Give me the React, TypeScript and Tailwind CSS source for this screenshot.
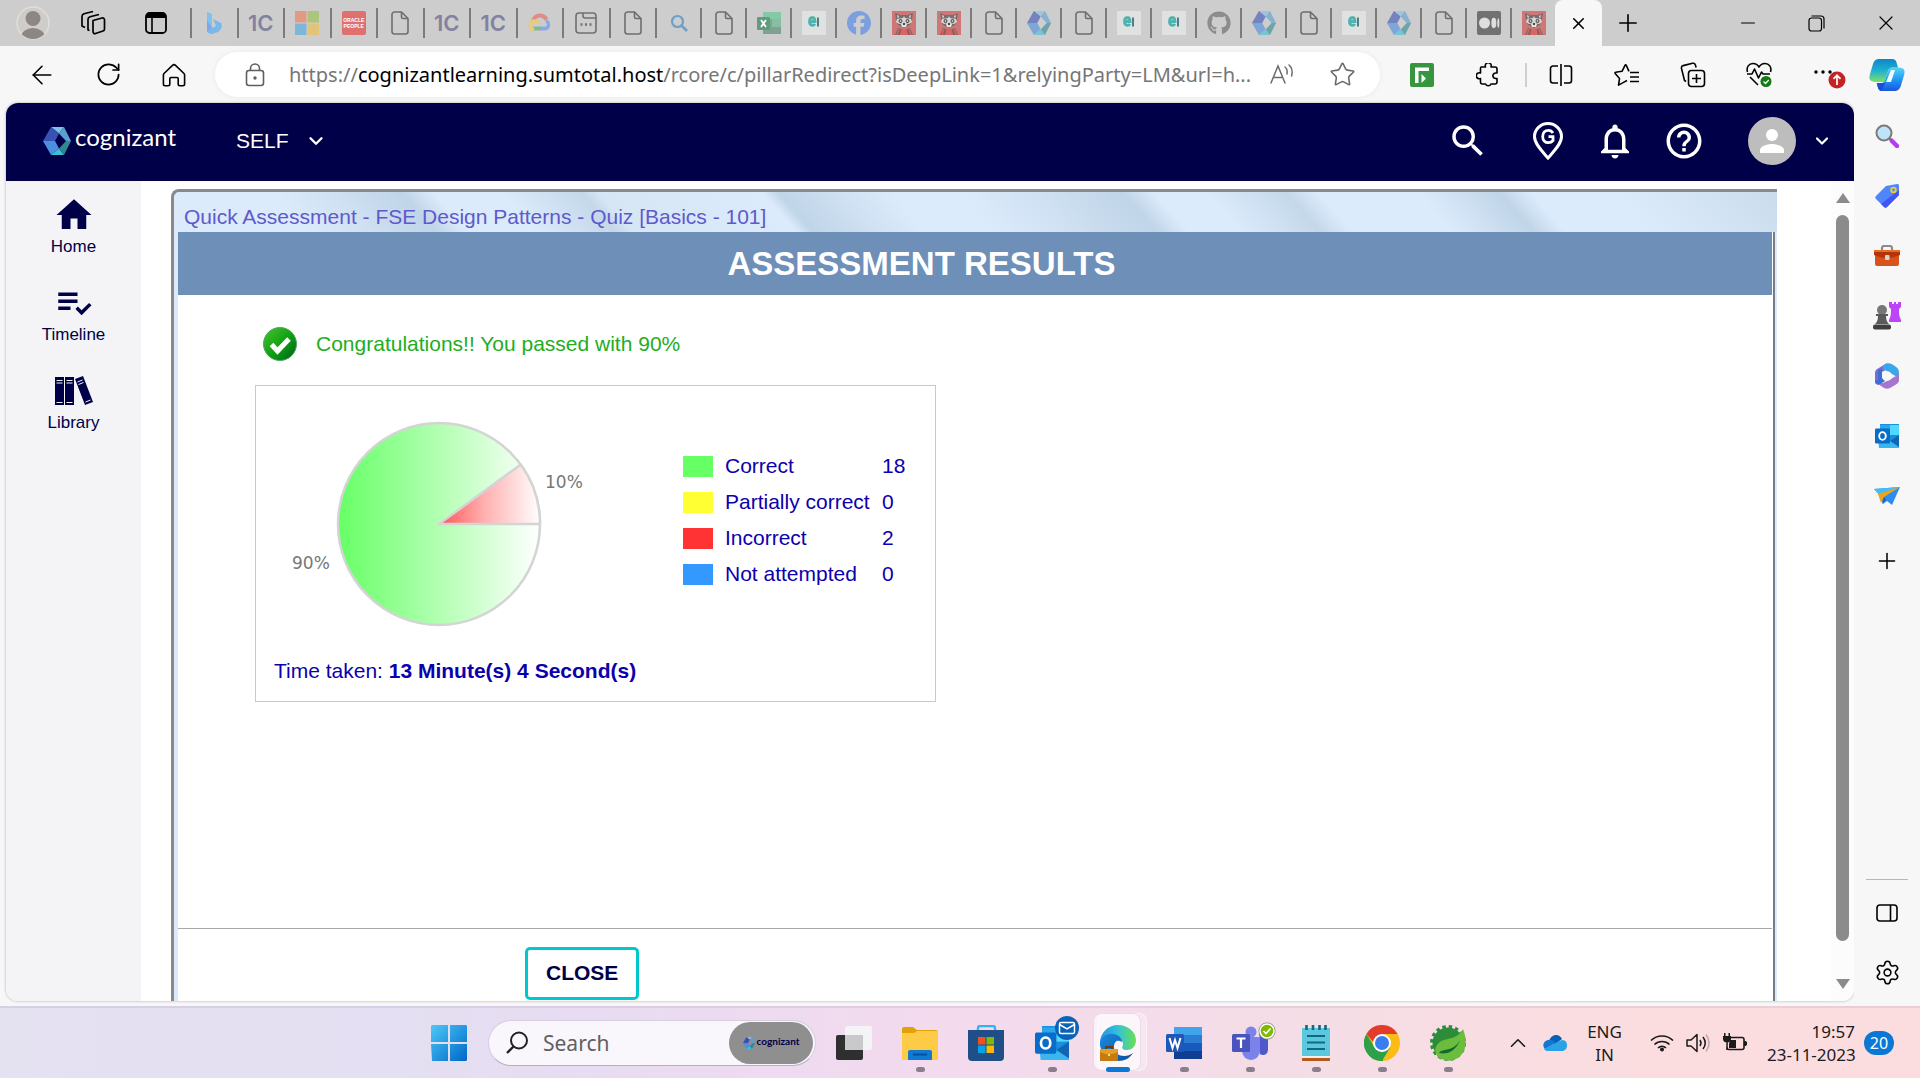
import type { ReactNode } from "react";
import { ArrowLeft, RotateCw, Star, Plus, X, Minus, Settings, ChevronUp, ChevronDown } from "lucide-react";
import { MdHome, MdHelpOutline, MdPlaylistAddCheck, MdSearch, MdNotificationsNone } from "react-icons/md";
import { FaGithub, FaFacebook } from "react-icons/fa6";

type IconProps = { w?: number; h?: number; box?: string; children: ReactNode };

function Icon({ w = 24, h = w, box, children }: IconProps) {
  return (
    <svg width={w} height={h} viewBox={box ?? `0 0 ${w} ${h}`} fill="none" aria-hidden="true" className="block shrink-0">
      {children}
    </svg>
  );
}

/* ---------- tab icons ---------- */

function PageIcon() {
  return (
    <Icon w={18} h={24}>
      <path d="M3 1h7.500l6.500 6.500V20.500A2.500 2.500 0 0 1 14.500 23h-11A2.500 2.500 0 0 1 1 20.500V3.500A2.500 2.500 0 0 1 3.500 1M10.500 1v5a1.500 1.500 0 0 0 1.500 1.500h5" stroke="#6e6e6e" strokeWidth="1.600" />
    </Icon>
  );
}

function BingIcon() {
  return (
    <Icon w={18} h={24}>
      <path d="M2 1l5 2v13l-5 5z" fill="#7cc4ee" />
      <path d="M7 17v3l-2 2-3-1V9z" fill="#7fa4ee" />
      <path d="M8 8l8 4c2 3 0 7-3 9l-6 2c-3 0-5-2-5-4l7-3 2-1z" fill="#78b8ea" />
    </Icon>
  );
}

function OneCIcon() {
  return <span className="font-[Inter] text-[22px] leading-6 font-semibold text-[#8381a0]">1C</span>;
}

function MicrosoftIcon() {
  return (
    <Icon w={24}>
      <path fill="#e29a84" d="M0 0h11.500v11.500H0z" />
      <path fill="#adc57a" d="M12.500 0H24v11.500H12.500z" />
      <path fill="#7ab7d9" d="M0 12.500h11.500V24H0z" />
      <path fill="#e3c37a" d="M12.500 12.500H24V24H12.500z" />
    </Icon>
  );
}

function OracleIcon() {
  return (
    <span className="flex h-6 w-6 flex-col items-center justify-center rounded-xs bg-[#df7070] font-['Liberation_Sans'] text-[5px] leading-[6px] font-bold text-white">
      <span>ORACLE</span>
      <span>PEOPLE</span>
    </span>
  );
}

function CloudIcon() {
  return (
    <Icon w={24} h={20}>
      <path d="M5 8.500C6 4.500 9 2.500 12 2.500c3 0 5 1.500 6.500 4" stroke="#e08b84" strokeWidth="4" />
      <path d="M18 6c4 1.500 4.500 5 4 7.500-.600 2.500-3 4-5 4h-5v-4h5c2 0 2.500-3 .500-4z" fill="#8aa9e6" />
      <path d="M5 15.500h7.500" stroke="#82b98f" strokeWidth="4" />
      <path d="M6 17C1 16 1 8 6 8c3 0 4 1 5 3" stroke="#e6cd7c" strokeWidth="3.600" />
    </Icon>
  );
}

function NewTabIcon() {
  return (
    <Icon w={22}>
      <rect x="1" y="1" width="20" height="20" rx="3" stroke="#707070" strokeWidth="1.600" />
      <path d="M8 1v3a2 2 0 0 0 2 2h11" stroke="#707070" strokeWidth="1.600" />
      <path d="M5.500 12.500h2M10 12.500h2M14.500 12.500h2" stroke="#707070" strokeWidth="2.400" />
    </Icon>
  );
}

function ExcelIcon() {
  return (
    <Icon w={24} h={22}>
      <path fill="#84c9a5" d="M6 0h18v7H6z" />
      <path fill="#6fae8e" d="M6 7h9v8H6z" />
      <path fill="#87bda0" d="M15 7h9v8h-9z" />
      <path fill="#7fa18f" d="M6 15h18v7H6z" />
      <rect y="5" width="13" height="13" rx="1" fill="#5f9d7c" />
      <path d="M4 8l5 7M9 8l-5 7" stroke="#fff" strokeWidth="1.800" />
    </Icon>
  );
}

function LetterEIcon() {
  return (
    <Icon w={24}>
      <path fill="#dfe2e1" d="M0 0h24v24H0z" />
      <path d="M7.500 10.500h5.500c0-5-5.500-5-5.500 0 0 4.500 4 4.500 5.500 2.500" stroke="#4fb3b3" strokeWidth="2.800" />
      <path d="M16 6.500v9" stroke="#4f7f86" strokeWidth="2" />
      <path d="M9 6.500h4" stroke="#6fae70" strokeWidth="1.500" />
    </Icon>
  );
}

function RaccoonIcon() {
  return (
    <Icon w={24}>
      <path fill="#d17676" d="M0 0h24v24H0z" />
      <path d="M3 2l5 2h8l5-2-1 7-2 5-6 3-6-3-2-5z" fill="#776e6d" />
      <path d="M5 4l2 1-1 3zM19 4l-2 1 1 3z" fill="#e4dfdd" />
      <path d="M5 8l6-1 1-2 1 2 6 1 1 3-3 2-5-1-5 1-3-2z" fill="#dcd7d5" />
      <circle cx="8.500" cy="10" r="2" fill="#555" />
      <circle cx="15.500" cy="10" r="2" fill="#555" />
      <circle cx="8.500" cy="10" r=".8" fill="#fff" />
      <circle cx="15.500" cy="10" r=".8" fill="#fff" />
      <path d="M9 13l3-2 3 2-1 3h-4z" fill="#ece8e6" />
      <circle cx="12" cy="13" r="1.200" fill="#444" />
      <path d="M3 24l3-7 6 2 6-2 3 7z" fill="#7d6262" />
      <path d="M9.500 18h5l1.500 6H8z" fill="#d96464" />
      <path d="M5 24l2-6M19 24l-2-6" stroke="#d96464" strokeWidth="1.500" />
    </Icon>
  );
}

function HexLogo({ size = 24, faded = false }: { size?: number; faded?: boolean }) {
  return (
    <span className={faded ? "opacity-60" : ""}>
      <Icon w={size} h={size} box="0 0 28 28">
        <path fill="#7fc0e6" d="M8 0h13l-5 6.500z" />
        <path fill="#5a9fd2" d="M21 0l7 14h-5l-7-7.500z" />
        <path fill="#3a51b4" d="M8 0l8 6.500-4 7.500H0z" />
        <path fill="#4a8fe0" d="M0 14h12l4 7.500L8 28z" />
        <path fill="#3cc0d8" d="M16 21.500L8 28h13z" />
        <path fill="#2c8a90" d="M23 14h5l-7 14-5-6.500z" />
      </Icon>
    </span>
  );
}

function MediumIcon() {
  return (
    <Icon w={24}>
      <rect width="24" height="24" rx="2" fill="#717171" />
      <ellipse cx="7.500" cy="12" rx="5.500" ry="5.500" fill="#dedede" />
      <ellipse cx="16.800" cy="12" rx="2.500" ry="5.200" fill="#dedede" />
      <ellipse cx="21.300" cy="12" rx="1" ry="4.800" fill="#dedede" />
    </Icon>
  );
}

const wideTabs: [string, ReactNode][] = [
  ["Bing", <BingIcon />],
  ["OneCognizant", <OneCIcon />],
  ["Microsoft", <MicrosoftIcon />],
  ["PeopleSoft", <OracleIcon />],
  ["Document", <PageIcon />],
  ["OneCognizant", <OneCIcon />],
  ["OneCognizant", <OneCIcon />],
  ["Cloud", <CloudIcon />],
  ["New tab", <NewTabIcon />],
  ["Document", <PageIcon />],
];

const narrowTabs: [string, ReactNode][] = [
  ["Search", <Icon w={18}><circle cx="7.500" cy="7.500" r="5.500" stroke="#6f9fc9" strokeWidth="2.200" /><path d="M11.500 11.500L17 17" stroke="#6f9fc9" strokeWidth="2.600" /></Icon>],
  ["Document", <PageIcon />],
  ["Spreadsheet", <ExcelIcon />],
  ["Learning", <LetterEIcon />],
  ["Facebook", <FaFacebook size={24} color="#7c9fe0" />],
  ["Forum", <RaccoonIcon />],
  ["Forum", <RaccoonIcon />],
  ["Document", <PageIcon />],
  ["Cognizant", <HexLogo faded />],
  ["Document", <PageIcon />],
  ["Learning", <LetterEIcon />],
  ["Learning", <LetterEIcon />],
  ["GitHub", <FaGithub size={24} color="#8a8c8e" />],
  ["Cognizant", <HexLogo faded />],
  ["Document", <PageIcon />],
  ["Learning", <LetterEIcon />],
  ["Cognizant", <HexLogo faded />],
  ["Document", <PageIcon />],
  ["Medium", <MediumIcon />],
  ["Forum", <RaccoonIcon />],
];

function Tab({ name, children }: { name: string; children: ReactNode }) {
  return (
    <button aria-label={name} className="flex h-[30px] flex-1 items-center justify-center border-l-2 border-[#7b7b7b]">
      {children}
    </button>
  );
}

function TabStrip() {
  return (
    <div className="flex h-[46px] shrink-0 items-center bg-[#cdcdcd] text-black">
      <div className="flex w-[190px] shrink-0 items-center pl-4">
        <button aria-label="Profile">
          <Icon w={34}>
            <clipPath id="profile"><circle cx="17" cy="17" r="16" /></clipPath>
            <circle cx="17" cy="17" r="16" fill="#cfcdc9" stroke="#e2dfda" strokeWidth="1.500" />
            <g clipPath="url(#profile)" fill="#8c8784">
              <circle cx="17" cy="12.500" r="7.500" />
              <ellipse cx="17" cy="31" rx="12" ry="9" />
            </g>
          </Icon>
        </button>
        <button aria-label="Workspaces" className="ml-[30px]">
          <Icon w={26}>
            <g stroke="#000" strokeWidth="1.700" strokeLinejoin="round">
              <path d="M13 10.500l9-2.500c1.500-.400 2.500.500 2.500 2v9c0 1-.600 1.800-1.500 2l-7.500 2.500c-1.500.500-2.500-.500-2.500-2z" />
              <path d="M9.500 20.500L8 20V9.500c0-1.300.700-2.200 2-2.700L19 4.500" />
              <path d="M5 17.500L2 16V6.500c0-1.300.700-2.200 2-2.700L13 1.500" />
            </g>
          </Icon>
        </button>
        <button aria-label="Tab actions" className="ml-[39px]">
          <Icon w={22}>
            <rect x="1" y="1" width="20" height="20" rx="3.500" stroke="#000" strokeWidth="1.800" />
            <path d="M1 6V4a3 3 0 0 1 3-3h14a3 3 0 0 1 3 3v2z" fill="#000" />
            <path d="M7 6v15" stroke="#000" strokeWidth="1.600" />
          </Icon>
        </button>
      </div>
      <div className="flex w-[465px]">
        {wideTabs.map(([name, icon], i) => <Tab key={i} name={name}>{icon}</Tab>)}
      </div>
      <div className="flex w-[900px]">
        {narrowTabs.map(([name, icon], i) => <Tab key={i} name={name}>{icon}</Tab>)}
      </div>
      <div className="flex h-full w-[47px] items-center justify-center rounded-t-lg bg-[#f7f7f7]">
        <button aria-label="Close tab"><X size={19} strokeWidth={2} /></button>
      </div>
      <button aria-label="New tab" className="ml-3"><Plus size={28} strokeWidth={1.4} /></button>
      <div className="ml-auto flex items-center">
        <button aria-label="Minimize" className="flex w-[69px] justify-center"><Minus size={22} strokeWidth={1.2} /></button>
        <button aria-label="Restore" className="flex w-[69px] justify-center">
          <Icon w={17}>
            <rect x="1" y="3" width="12.500" height="13" rx="2.500" stroke="#000" strokeWidth="1.200" />
            <path d="M3.500 1H13a3 3 0 0 1 3 3v9.500" stroke="#000" strokeWidth="1.200" />
          </Icon>
        </button>
        <button aria-label="Close window" className="flex w-[69px] justify-center"><X size={24} strokeWidth={1.2} /></button>
      </div>
    </div>
  );
}

/* ---------- toolbar ---------- */

function ToolButton({ name, children }: { name: string; children: ReactNode }) {
  return <button aria-label={name} className="flex h-10 w-[66px] shrink-0 items-center justify-center">{children}</button>;
}

function Toolbar() {
  return (
    <div className="flex h-[57px] shrink-0 items-center bg-[#f7f7f7] pl-[9px] text-black">
      <ToolButton name="Back"><ArrowLeft size={30} strokeWidth={1.3} /></ToolButton>
      <ToolButton name="Refresh"><RotateCw size={27} strokeWidth={1.5} /></ToolButton>
      <ToolButton name="Home">
        <Icon w={24}>
          <path d="M2 10.500L10.500 2.300a2.200 2.200 0 0 1 3 0L22 10.500c.400.400.600.900.600 1.500V21c0 1-.700 1.700-1.700 1.700h-3c-1 0-1.700-.700-1.700-1.700v-5.300c0-.700-.600-1.200-1.200-1.200h-6c-.700 0-1.200.600-1.200 1.200V21c0 1-.800 1.700-1.700 1.700h-3c-1 0-1.700-.700-1.700-1.700v-9c0-.600.200-1.100.600-1.500z" stroke="#000" strokeWidth="1.600" />
        </Icon>
      </ToolButton>
      <div className="ml-2 flex h-[45px] min-w-0 flex-1 items-center rounded-full bg-white pr-6 pl-[30px] shadow-[0_0_6px_rgba(0,0,0,0.06)]">
        <Icon w={20} h={24}>
          <rect x="1.500" y="7.500" width="17" height="15" rx="2.500" stroke="#5f5f5f" strokeWidth="1.600" />
          <path d="M5.500 7.500V5.500a4.500 4.500 0 0 1 9 0v2" stroke="#5f5f5f" strokeWidth="1.600" />
          <circle cx="10" cy="15" r="1.700" fill="#5f5f5f" />
        </Icon>
        <div role="textbox" aria-label="Address" className="ml-6 min-w-0 flex-1 overflow-hidden font-['Noto_Sans','Open_Sans',sans-serif] text-[20px] leading-8 whitespace-nowrap text-[#767676]">
          https://<span className="text-black">cognizantlearning.sumtotal.host</span>/rcore/c/pillarRedirect?isDeepLink=1&amp;relyingParty=LM&amp;url=h...
        </div>
        <button aria-label="Read aloud" className="ml-4">
          <Icon w={26} h={24}>
            <path d="M2 20L9 3l7 17M4.500 14.500h9" stroke="#6b6b6b" strokeWidth="1.500" strokeLinecap="round" />
            <path d="M16 4c2 1.500 2.500 4 2 7M20 2c3 2.500 3.700 6.500 2.600 11" stroke="#6b6b6b" strokeWidth="1.500" strokeLinecap="round" />
          </Icon>
        </button>
        <button aria-label="Favorite" className="ml-[34px] text-[#6b6b6b]"><Star size={27} strokeWidth={1.4} /></button>
      </div>
      <div className="flex shrink-0 items-center pl-[9px]">
        <ToolButton name="Assistant">
          <Icon w={24}>
            <rect width="24" height="24" rx="2" fill="#36963e" />
            <path fill="#fff" d="M5 4.500h14v3.500H8.500V20H5z" />
            <path d="M11.500 11l4.500 4.500-4.500 4.500z" fill="#fff" />
          </Icon>
        </ToolButton>
        <ToolButton name="Extensions">
          <Icon w={24}>
            <path d="M5 4h4.500a3 3 0 1 1 5.500 0h4a2 2 0 0 1 2 2v4h-.800a2.800 2.800 0 1 0 0 5.500H21V19a2 2 0 0 1-2 2h-4a3 3 0 0 1-5.500 0H6.500a2 2 0 0 1-2-2v-3.500a3 3 0 1 1 0-5.500V5z" stroke="#000" strokeWidth="1.600" strokeLinejoin="round" />
          </Icon>
        </ToolButton>
        <span className="mr-[1px] ml-1 h-6 w-[2px] bg-[#cfcfcf]" />
        <ToolButton name="Split screen">
          <Icon w={24}>
            <path d="M9 3H4a2.500 2.500 0 0 0-2.500 2.500v12A2.500 2.500 0 0 0 4 20h5M15 3h5a2.500 2.500 0 0 1 2.500 2.500v12A2.500 2.500 0 0 1 20 20h-5M12 1v22" stroke="#000" strokeWidth="1.600" />
          </Icon>
        </ToolButton>
        <ToolButton name="Favorites">
          <Icon w={26} h={24}>
            <path d="M13 17.500l-3 1.600-5.500 3 1-6.500L1.200 10.500a.7.7 0 0 1 .400-1.200L8 8.300l3-6c.300-.600 1-.600 1.300 0L15 8.300M16 9.500h9M16 14h9M16 18.500h9" stroke="#000" strokeWidth="1.600" strokeLinejoin="round" />
          </Icon>
        </ToolButton>
        <ToolButton name="Collections">
          <Icon w={26}>
            <rect x="8.500" y="8.500" width="16" height="16" rx="3" stroke="#000" strokeWidth="1.600" />
            <path d="M16.500 12v9M12 16.500h9M6 19.500l-1.500-1L1.500 6.500C1.200 5 2 4 3.200 3.600L12.500 1.300c1.400-.300 2.500.400 2.900 1.700l.700 2.500" stroke="#000" strokeWidth="1.600" />
          </Icon>
        </ToolButton>
        <ToolButton name="Browser essentials">
          <Icon w={26}>
            <path d="M1.500 10C0 5 3 1.500 7 1.500c2.500 0 4.500 1 6 3.500 1.500-2.500 3.500-3.500 6-3.500 4 0 7 3.500 5.500 8.500M4 15l8 8M1 12h5l2.500-5 4 9 3-6 1.500 2h7" stroke="#000" strokeWidth="1.600" strokeLinejoin="round" />
            <circle cx="20" cy="19.500" r="5.500" fill="#107c10" />
            <path d="M17.500 19.500l2 2 3.300-3.500" stroke="#fff" strokeWidth="1.300" />
          </Icon>
        </ToolButton>
        <button aria-label="Settings and more" className="ml-[6px] flex w-[62px] justify-center">
          <Icon w={34} h={30}>
            <g fill="#000"><circle cx="4" cy="12" r="1.700" /><circle cx="11" cy="12" r="1.700" /><circle cx="18" cy="12" r="1.700" /></g>
            <circle cx="25" cy="20" r="8.500" fill="#c42323" />
            <path d="M25 25V15.500M21.500 18.800l3.500-3.500 3.500 3.500" stroke="#fff" strokeWidth="1.700" />
          </Icon>
        </button>
        <button aria-label="Copilot" className="mr-[15px] ml-[9px]">
          <Icon w={36} h={34}>
            <defs>
              <linearGradient id="cpA" x1="0" y1="0" x2="0" y2="1"><stop stopColor="#0d86c8" /><stop offset=".5" stopColor="#20b0cf" /><stop offset="1" stopColor="#7be06c" /></linearGradient>
              <linearGradient id="cpB" x1="0" y1="0" x2="0" y2="1"><stop stopColor="#52d6fa" /><stop offset=".6" stopColor="#1c8df0" /><stop offset="1" stopColor="#1c55dd" /></linearGradient>
            </defs>
            <path d="M13 33c-2.500 0-3.500-1.500-4.200-4L7.500 25H12c2.500 0 3.500-1 4.200-3.500L20 9.500h8c6 0 8 1.500 7.500 5.500-.500 3-2.500 9-3.500 12.500-1.500 4-3 5.500-7 5.500z" fill="url(#cpB)" />
            <path d="M8 25h8l-3 8c-2.500 0-3.500-1.500-4.200-4z" fill="#1a4fd8" />
            <path d="M23 1c3 0 4 1.500 4.700 4L29 9.500h-5.500c-3 0-4 1.500-4.700 4L15.500 24H8c-6 0-8-1.500-7.500-5.500.500-3 2.500-9 3.500-12.500C5.500 2 7 1 11 1z" fill="url(#cpA)" />
            <path d="M22 12h4l-4 12h-5z" fill="#f2fbff" />
          </Icon>
        </button>
      </div>
    </div>
  );
}

/* ---------- site header and navigation ---------- */

function SiteHeader() {
  return (
    <header className="flex h-[78px] shrink-0 items-center bg-[#000048] pb-[2px] pl-[37px] text-white">
      <a href="#home" className="flex items-center gap-1">
        <HexLogo size={28} />
        <span className="-mt-2 font-[Lato] text-[24px] leading-8">cognizant</span>
      </a>
      <button className="ml-[60px] flex items-center gap-4 font-['Liberation_Sans'] text-[21px] leading-6">
        SELF <ChevronDown size={22} strokeWidth={2.6} />
      </button>
      <div className="ml-auto flex items-center pr-[18px]">
        <button aria-label="Search" className="flex w-10 justify-center"><MdSearch size={42} className="shrink-0" /></button>
        <button aria-label="Location" className="ml-10 flex w-10 justify-center">
          <Icon w={32} h={38}>
            <path d="M16 36C10 29 2.500 22 2.500 14.500a13.500 13 0 0 1 27 0C29.500 22 22 29 16 36z" stroke="#fff" strokeWidth="3" />
            <path d="M21 11c-1-1.700-2.700-2.700-4.700-2.700-3.300 0-5.600 2.500-5.600 6.200s2.300 6.200 5.600 6.200c2 0 3.700-.700 4.700-2v-4h-4.500" stroke="#fff" strokeWidth="2.800" />
          </Icon>
        </button>
        <button aria-label="Notifications" className="ml-[27px] flex w-10 justify-center"><MdNotificationsNone size={42} className="shrink-0" /></button>
        <button aria-label="Help" className="ml-[29px] flex w-10 justify-center"><MdHelpOutline size={42} className="shrink-0" /></button>
        <button aria-label="Account" className="ml-11 flex items-center gap-3">
          <Icon w={48}>
            <circle cx="24" cy="24" r="24" fill="#bdbdbd" />
            <circle cx="24" cy="18" r="6" fill="#fff" />
            <path d="M12 36v-3c0-4 8-6 12-6s12 2 12 6v3z" fill="#fff" />
          </Icon>
          <span className="flex w-7 justify-center"><ChevronDown size={20} strokeWidth={2.6} /></span>
        </button>
      </div>
    </header>
  );
}

function BooksIcon() {
  return (
    <Icon w={38} h={30}>
      <path fill="#000048" d="M0 1h9v28H0zM10 1h9v28h-9zM20 3l8-3 10 26-8 3z" />
      <path d="M1.500 4.500h6M1.500 7h6M1.500 26.500h6M11.500 4.500h6M11.500 7h6M11.500 26.500h6M22.500 6l5-2M23.500 8.500l5-2M30.500 26l5-2" stroke="#f4f4f7" strokeWidth="1" />
    </Icon>
  );
}

const navItems: [string, ReactNode][] = [
  ["Home", <MdHome size={42} />],
  ["Timeline", <MdPlaylistAddCheck size={42} />],
  ["Library", <BooksIcon />],
];

function SideNav() {
  return (
    <nav className="flex w-[135px] shrink-0 flex-col gap-4 bg-[#f4f4f7] pt-3 font-['Liberation_Sans'] text-[17px] leading-5 text-[#000048]">
      {navItems.map(([label, icon]) => (
        <a key={label} href={`#${label.toLowerCase()}`} className="flex h-[72px] flex-col items-center">
          <span className="flex h-11 items-center">{icon}</span>
          <span>{label}</span>
        </a>
      ))}
    </nav>
  );
}

/* ---------- assessment ---------- */

const results = [
  { label: "Correct", count: 18, color: "bg-[#66ff66]" },
  { label: "Partially correct", count: 0, color: "bg-[#ffff33]" },
  { label: "Incorrect", count: 2, color: "bg-[#ff3333]" },
  { label: "Not attempted", count: 0, color: "bg-[#3399ff]" },
];

function PieChart() {
  return (
    <svg width="310" height="217" viewBox="0 0 310 217" role="img" aria-label="90% correct, 10% incorrect" className="shrink-0">
      <defs>
        <linearGradient id="green"><stop stopColor="#66ff66" /><stop offset="1" stopColor="#ffffff" /></linearGradient>
        <linearGradient id="red"><stop stopColor="#ff5555" /><stop offset=".45" stopColor="#ffb0b0" /><stop offset="1" stopColor="#ffffff" /></linearGradient>
      </defs>
      <g stroke="#d4d4d4" strokeWidth="2.500" strokeLinejoin="round">
        <circle cx="153" cy="109" r="101" fill="url(#green)" />
        <path d="M153 109L234.700 49.600A101 101 0 0 1 254 109z" fill="url(#red)" />
      </g>
      <g fill="#777" fontFamily="DejaVu Sans, sans-serif" fontSize="17">
        <text x="6" y="154">90%</text>
        <text x="259" y="73">10%</text>
      </g>
    </svg>
  );
}

function Assessment() {
  return (
    <section className="flex w-[1606px] flex-col font-['Liberation_Sans'] text-[21px]">
      <div className="h-[43px] rounded-tl-lg border-t-[3px] border-l-[3px] border-[#8a8a8a] bg-[linear-gradient(49deg,#dcebfc_0%,#dcebfc_8%,#c0d5e8_16%,#dcebfc_18%,#dcebfc_22%,#c4d8ea_27%,#d6e6f4_28%,#dcebfc_38%,#c0d5e8_39%,#dcebfc_46%,#dcebfc_50%,#c0d5e8_60%,#dcebfc_62%,#dcebfc_65%,#c4d8ea_70%,#dcebfc_72%,#dcebfc_78%,#c0d5e8_83%,#dcebfc_85%,#dcebfc_90%,#cadcec_100%)] pt-[10px] pl-[10px] leading-[30px] text-[#6059cc]">
        Quick Assessment - FSE Design Patterns - Quiz [Basics - 101]
      </div>
      <div className="flex flex-1 border-r-2 border-l-[3px] border-r-[#dcebfc] border-l-[#8a8a8a]">
        <div className="w-1 bg-[#dcebfc]" />
        <div className="flex flex-1 flex-col">
          <h1 className="flex h-[63px] items-center justify-center bg-[#6e8fb8] pr-[107px] text-[33px] leading-9 font-bold text-white">
            ASSESSMENT RESULTS
          </h1>
          <div className="flex items-center gap-[19px] pt-8 pl-[85px] text-[#22ad22]">
            <Icon w={34}>
              <defs>
                <linearGradient id="ok" x1="0" y1="0" x2="1" y2="1"><stop stopColor="#48c62c" /><stop offset=".6" stopColor="#079a10" /><stop offset="1" stopColor="#04591f" /></linearGradient>
              </defs>
              <circle cx="17" cy="17" r="16.500" fill="url(#ok)" stroke="#54a06a" />
              <path d="M8.500 17.500l6 6.500L26 12" stroke="#fff" strokeWidth="5" />
            </Icon>
            <p className="leading-8">Congratulations!! You passed with 90%</p>
          </div>
          <div className="mt-6 ml-[77px] w-[681px] border border-[#c9c9c9] pt-[29px] pb-[15px] text-[#0b00ad]">
            <div className="flex items-start pl-[30px]">
              <PieChart />
              <table className="mt-[33px] ml-[87px]">
                <tbody>
                  {results.map((r) => (
                    <tr key={r.label} className="h-9">
                      <td className="w-[42px] p-0"><div className={`h-[21px] w-[30px] ${r.color}`} /></td>
                      <th scope="row" className="w-[157px] p-0 text-left leading-6 font-normal whitespace-nowrap">{r.label}</th>
                      <td className="p-0 leading-6">{r.count}</td>
                    </tr>
                  ))}
                </tbody>
              </table>
            </div>
            <p className="mt-6 pl-[18px] leading-[30px]">
              Time taken: <strong>13 Minute(s) 4 Second(s)</strong>
            </p>
          </div>
          <div className="mt-auto h-[73px] border-t border-[#a8a8a8] pt-[18px] pl-[347px]">
            <button className="h-[53px] rounded-[5px] border-[3px] border-[#00c8cd] px-[18px] pb-[2px] text-[21px] leading-6 font-bold text-[#000048]">CLOSE</button>
          </div>
        </div>
        <div className="w-[3px] border-r-2 border-[#747c86]" />
      </div>
    </section>
  );
}

function ScrollBar() {
  return (
    <div className="ml-auto flex w-[23px] shrink-0 flex-col items-center bg-[#fcfcfc] pt-3 pb-3">
      <Icon w={14} h={10}><path d="M7 0l7 10H0z" fill="#8b8b8b" /></Icon>
      <div className="mt-3 mb-[38px] w-[13px] flex-1 rounded-full bg-[#8b8b8b]" />
      <Icon w={14} h={10}><path d="M0 0h14L7 10z" fill="#8b8b8b" /></Icon>
    </div>
  );
}

/* ---------- browser side bar ---------- */

function OutlookIcon({ size = 24 }: { size?: number }) {
  return (
    <Icon w={size} box="0 0 24 24">
      <path fill="#1b8fdc" d="M5 0h19v23H5z" />
      <path fill="#50d9ff" d="M15 1h9v10h-9z" />
      <path fill="#28a8ea" d="M5 1h10v10H5z" />
      <path fill="#1066b5" d="M24 11l-9 6 9 6z" />
      <path fill="#39b5f0" d="M3 15l12 2 9 6v1H4z" />
      <rect y="4.500" width="15" height="15" rx="1.200" fill="#0a6cc9" />
      <ellipse cx="7.500" cy="12" rx="3.300" ry="3.900" stroke="#fff" strokeWidth="1.900" />
    </Icon>
  );
}

const sideApps: [string, ReactNode][] = [
  ["Search", <Icon w={24}><circle cx="9" cy="9" r="7.500" fill="#bfe4f8" stroke="#7a7a7a" strokeWidth="2" /><path d="M14.500 14.500l3 3" stroke="#777" strokeWidth="3" /><path d="M17 17l5 5" stroke="#b33cf0" strokeWidth="4.500" strokeLinecap="round" /></Icon>],
  ["Shopping", <Icon w={24}><path d="M11 2l11-2c1.500 0 2 .500 2 2v9l-12 12c-1 1-2 1-3 0L1 15c-1-1-1-2 0-3z" fill="#4f86fb" /><path d="M24 6v5L12 23c-1 1-2 1-3 0l-3-3z" fill="#4454f4" /><circle cx="18.500" cy="6" r="2.300" stroke="#f5cf1c" strokeWidth="1.800" /></Icon>],
  ["Tools", <Icon w={28} h={22}><path d="M9 6V3a2 2 0 0 1 2-2h6a2 2 0 0 1 2 2v3" stroke="#8b8b8b" strokeWidth="2.200" /><rect x="2" y="6" width="24" height="15" rx="2" fill="#d9521b" /><path d="M1 5h26v5c-4 2-9 3-13 3S5 12 1 10z" fill="#b5330d" /><path d="M1 5h26v2H1z" fill="#ea6e22" /><rect x="12" y="10" width="4.500" height="5" rx="1" fill="#d8d4d0" /></Icon>],
  ["Games", <Icon w={28}><circle cx="9" cy="8" r="5" fill="#777" /><path d="M3 12h12v2h-2c0 4 1 6 3 8H2c2-2 3-4 3-8H3z" fill="#5a5a5a" /><rect y="22.500" width="18" height="5" rx="2" fill="#3e3e3e" /><path d="M16 0h3v2h2V0h2v2h2V0h3v5l-2 2c0 5 0 7 2 11v2H16v-2c2-4 2-6 2-11l-2-2z" fill="#bd45f7" /></Icon>],
  ["Microsoft 365", <Icon w={24} h={26}><path d="M12 0L3 5.500C1 6.500 0 8 0 10v9c0 1 .500 2 2 2.500 3 1.500 5-.500 5-3V9l8-4.500z" fill="#7e6bd0" /><path d="M11 1c3-2 6 0 8 1.500 4 2.500 5 4 5 7.500v5L8 6c-1-2 0-3.500 3-5z" fill="#3aa7ea" /><path d="M24 10v7c0 2-1 3-3 4.500l-6 3.500c-2 1-4 1-6 0l-6-4 5-1 8-4c3-2 4-2 8-6z" fill="#a675cf" /><path d="M0 18c0 3 4 4 7 2l3-2-3-3V6L3 7v10z" fill="#3b6fd6" /><circle cx="12" cy="13" r="4.800" fill="#f7f7f7" /></Icon>],
  ["Outlook", <OutlookIcon size={24} />],
  ["Drop", <Icon w={26} h={18}><path d="M0 2l26-2-8 18-5-4-4 3-3-9z" fill="#2d8cf0" /><path d="M0 2l26-2L5 8z" fill="#42bdf5" /><path d="M26 0L4 7l3 9 3-6z" fill="#efa31c" /><path d="M10 10l-2 7 4-4z" fill="#1c5fc4" /></Icon>],
];

function EdgeSidebar() {
  return (
    <aside className="flex w-[66px] shrink-0 flex-col items-center bg-[#f7f7f7] pt-[3px] text-black">
      {sideApps.map(([name, icon]) => (
        <button key={name} aria-label={name} className="flex h-[60px] w-full shrink-0 items-center justify-center">{icon}</button>
      ))}
      <button aria-label="Customize" className="mt-[22px]"><Plus size={26} strokeWidth={1.4} /></button>
      <div className="mt-auto h-[1px] w-[42px] bg-[#b8b8b8]" />
      <button aria-label="Side pane" className="mt-6">
        <Icon w={22} h={18}><rect x="1" y="1" width="20" height="16" rx="3" stroke="#000" strokeWidth="1.600" /><path d="M14.500 1v16" stroke="#000" strokeWidth="1.600" /></Icon>
      </button>
      <button aria-label="Settings" className="mt-[37px] mb-5"><Settings size={27} strokeWidth={1.4} /></button>
    </aside>
  );
}

/* ---------- task bar ---------- */

function StoreIcon() {
  return (
    <Icon w={36}>
      <path d="M10 7V3a2 2 0 0 1 2-2h13a2 2 0 0 1 2 2v4" stroke="#2fb6f2" strokeWidth="2.400" />
      <path d="M0 5h36v27a4 4 0 0 1-4 4H4a4 4 0 0 1-4-4z" fill="#1f4f86" />
      <path fill="#f25022" d="M10 12h7.500v7.500H10z" /><path fill="#7fba00" d="M18.500 12H26v7.500h-7.500z" />
      <path fill="#00a4ef" d="M10 20.500h7.500V28H10z" /><path fill="#ffb900" d="M18.500 20.500H26V28h-7.500z" />
    </Icon>
  );
}

function EdgeIcon() {
  return (
    <Icon w={36}>
      <defs>
        <linearGradient id="edA"><stop stopColor="#2593e0" /><stop offset=".5" stopColor="#33c3d8" /><stop offset="1" stopColor="#6be052" /></linearGradient>
        <linearGradient id="edB" x1="0" y1="0" x2="1" y2="1"><stop stopColor="#1b8ae0" /><stop offset="1" stopColor="#0d4f9c" /></linearGradient>
      </defs>
      <path d="M0 18C0 8 8 0 18 0s18 7 18 15c0 7-5 10-9 10-5 0-5-2-4.500-3.500C24 19 23 14 16 13 8 12 2 16 0 22z" fill="url(#edA)" />
      <path d="M0 18c1-6 7-10 13-9 6 .500 9 5 9 8-5-3-8 0-8 5 0 6 5 9 10 9 4 0 6-1 9-3-3 5-8 8-15 8C8 36 0 28 0 18z" fill="url(#edB)" />
      <path d="M0 24h18v12H0z" fill="#c37a11" /><path d="M0 24h18v3c-6 3-12 3-18 0z" fill="#e79d24" />
      <path d="M6 24v-2h6v2" stroke="#6c3d0a" strokeWidth="2" /><circle cx="9" cy="30" r="1.200" fill="#ffe27a" />
    </Icon>
  );
}

const taskApps: { name: string; icon: ReactNode; dot?: boolean; active?: boolean }[] = [
  {
    name: "Task view",
    icon: <Icon w={36} h={34}><rect y="9" width="27" height="25" rx="2" fill="#2f2f2f" /><rect x="9" width="27" height="24" rx="2" fill="#f4f4f6" /><path d="M9 9h18v15H9z" fill="#c9c9cb" /></Icon>,
  },
  {
    name: "File Explorer", dot: true,
    icon: <Icon w={36} h={33}><path d="M0 2a2 2 0 0 1 2-2h9l4 3h19a2 2 0 0 1 2 2v5H0z" fill="#e2a207" /><path d="M0 6h12l3-2h21v29H0z" fill="#fdcb45" /><path d="M6 33V25a2 2 0 0 1 2-2h20a2 2 0 0 1 2 2v8z" fill="#0f7bd0" /><path d="M11 27.500h14" stroke="#0a4f9a" strokeWidth="2" /></Icon>,
  },
  { name: "Microsoft Store", icon: <StoreIcon /> },
  {
    name: "Outlook", dot: true,
    icon: (
      <span className="relative block">
        <OutlookIcon size={34} />
        <span className="absolute -top-[10px] left-5">
          <Icon w={24}><circle cx="12" cy="12" r="12" fill="#0a63b8" /><rect x="4.500" y="6.500" width="15" height="11" rx="1.500" stroke="#fff" strokeWidth="1.500" /><path d="M4.500 8.500l7.500 4.500 7.500-4.500" stroke="#fff" strokeWidth="1.500" /></Icon>
        </span>
      </span>
    ),
  },
  { name: "Edge", active: true, icon: <EdgeIcon /> },
  {
    name: "Word", dot: true,
    icon: <Icon w={36} h={34}><path fill="#41a5ee" d="M8 1h28v8H8z" /><path fill="#2b7cd3" d="M8 9h28v8H8z" /><path fill="#185abd" d="M8 17h28v8H8z" /><path fill="#103f91" d="M8 25h28v8H8z" /><rect y="8" width="18" height="18" rx="1.500" fill="#1d58b8" /><path d="M3.500 12l3 10L9 14l2.500 8 3-10" stroke="#fff" strokeWidth="2" /></Icon>,
  },
  {
    name: "Teams", dot: true,
    icon: (
      <span className="relative block">
        <Icon w={36} h={34}><circle cx="19" cy="6" r="5.500" fill="#7b83eb" /><circle cx="31" cy="8" r="4" fill="#5059c9" /><path d="M26 11h10v13a5 5 0 0 1-8 4z" fill="#5059c9" /><path d="M10 11h18v14a9 9 0 0 1-18 0z" fill="#7b83eb" /><rect y="8" width="18" height="18" rx="1.500" fill="#4b53bc" /><path d="M4.500 12.500h9M9 12.500V22" stroke="#fff" strokeWidth="2.200" /></Icon>
        <span className="absolute -top-1 left-[26px]">
          <Icon w={18}><circle cx="9" cy="9" r="8.500" fill="#8a8a8a" /><circle cx="9" cy="9" r="7" fill="#7fba00" stroke="#fff" strokeWidth="1.500" /><path d="M5.500 9L8 11.500l4.500-5" stroke="#fff" strokeWidth="1.600" /></Icon>
        </span>
      </span>
    ),
  },
  {
    name: "Notepad", dot: true,
    icon: <Icon w={28} h={36}><path d="M0 3h28v29H0z" fill="#5cc8de" /><path d="M0 31h28v2H0z" fill="#f4efe8" /><path d="M0 33h28v3H0z" fill="#b6591c" /><path d="M5 11h18M5 17.500h18M5 24h18" stroke="#0f6884" strokeWidth="2" /><path d="M4.500 0v5M11 0v5M17.500 0v5M23.500 0v5" stroke="#0f6884" strokeWidth="2.600" /></Icon>,
  },
  {
    name: "Chrome", dot: true,
    icon: <Icon w={36}><circle cx="18" cy="18" r="18" fill="#fbbc15" /><path d="M2.400 9A18 18 0 0 1 33.600 9H18l-8 9z" fill="#e33b2e" /><path d="M2.400 9L11 23l7 4 1 9A18 18 0 0 1 2.400 9z" fill="#2da04a" /><path d="M18 36l8.500-14L18 27l-4-1z" fill="#2da04a" /><circle cx="18" cy="18" r="9" fill="#fff" /><circle cx="18" cy="18" r="7" fill="#3b7cf0" /></Icon>,
  },
  {
    name: "Spring Tool Suite", dot: true,
    icon: <Icon w={36}><circle cx="18" cy="18" r="15.500" fill="#2c8c3a" /><circle cx="18" cy="18" r="16.500" stroke="#2c8c3a" strokeWidth="3" strokeDasharray="3.500 3" /><path d="M33 4c4 10 4 21-3 27-7 7-17 5-22 1-5-5-3-14 6-17 8-2 15-3 19-11z" fill="#6cbc3e" /><path d="M9 28c8 2 17-2 21-13-4 7-9 9-15 10-3 .500-5 1-6 3z" fill="#0f6b30" /></Icon>,
  },
];

function TaskBar() {
  return (
    <footer className="flex h-[72px] shrink-0 items-center bg-[linear-gradient(90deg,#e4e1f1_0%,#e4dff2_20%,#e8dcf1_32%,#f3daee_48%,#f5dde6_68%,#fbdde0_85%)] pt-[2px] pl-[416px] font-['Noto_Sans','Open_Sans',sans-serif] text-[#1b1b1b] shadow-[inset_0_2px_0_rgba(120,90,140,0.12)]">
      <button aria-label="Start" className="flex w-[66px] justify-center">
        <Icon w={36}>
          <defs><linearGradient id="win" x1="0" y1="0" x2="1" y2="1"><stop stopColor="#4cc8f8" /><stop offset="1" stopColor="#0067c8" /></linearGradient></defs>
          <path d="M1 0h16v17H0V1zM19 0h16l1 1v16H19zM0 19h17v17H1zM19 19h17v16l-1 1H19z" fill="url(#win)" />
        </Icon>
      </button>
      <label className="ml-[6px] flex h-[46px] w-[328px] items-center rounded-full border border-[#d6cde0] border-b-[#b9adc4] bg-[#f9f6fc] pr-[2px] pl-4">
        <Icon w={24}><circle cx="14" cy="9.500" r="8" stroke="#222" strokeWidth="2" /><path d="M8.500 15.500L2 22" stroke="#222" strokeWidth="2.400" /></Icon>
        <input aria-label="Search" placeholder="Search" className="ml-[14px] w-0 min-w-0 flex-1 bg-transparent text-[21px] leading-7 outline-none placeholder:text-[#606060]" />
        <span className="flex h-[42px] w-[84px] items-center justify-center gap-[2px] rounded-full bg-[#8f8f8f]">
          <HexLogo size={12} />
          <span className="-mt-1 font-[Lato] text-[10px] leading-4 font-bold text-[#000048]">cognizant</span>
        </span>
      </label>
      <div className="ml-[5px] flex">
        {taskApps.map((app) => (
          <button key={app.name} aria-label={app.name} className="relative flex h-[60px] w-[66px] items-center justify-center">
            {app.active && <span className="absolute top-0 right-1 left-3 h-[58px] rounded-lg border border-white/50 bg-white/30" />}
            {app.active && <span className="absolute top-0 right-[10px] left-2 h-[58px] rounded-lg border border-[#ead9e6] bg-white/60" />}
            <span className="relative">{app.icon}</span>
            {app.dot && <span className="absolute bottom-px left-[29px] h-[5px] w-[9px] rounded-full bg-[#8b7e8c]" />}
            {app.active && <span className="absolute bottom-px left-[21px] h-[5px] w-6 rounded-full bg-[#0a78d4]" />}
          </button>
        ))}
      </div>
      <div className="ml-auto flex items-center pr-[26px] text-[17px] leading-[23px]">
        <button aria-label="Show hidden icons"><ChevronUp size={26} strokeWidth={1.5} /></button>
        <button aria-label="OneDrive" className="ml-3">
          <Icon w={24} h={16}><path d="M6 7C7 2 10 0 13 0c3 0 5 2 6 4l-8 6z" fill="#0a5fb5" /><path d="M5 5c3-.500 5 .500 7 2l-8 8c-5-1-5-9 1-10z" fill="#1177d1" /><path d="M12 8l7-3c4 0 5 3 5 5.500 0 3-2 5.500-5 5.500H5c-1.500 0-3-.500-4-2z" fill="#2aa2ea" /></Icon>
        </button>
        <button className="ml-5 w-[35px] text-center"><span className="block">ENG</span><span className="block">IN</span></button>
        <button aria-label="Wi-Fi" className="ml-7">
          <Icon w={24} h={18}><path d="M1 6.500c6-6 16-6 22 0M4.500 10.500c4-4 11-4 15 0M8 14c2.300-2.300 5.700-2.300 8 0" stroke="#1b1b1b" strokeWidth="1.700" /><circle cx="12" cy="15.500" r="2" fill="#1b1b1b" /></Icon>
        </button>
        <button aria-label="Volume" className="ml-3">
          <Icon w={24} h={20}><path d="M1 7h4l6-5.500v17L5 13H1z" stroke="#1b1b1b" strokeWidth="1.500" strokeLinejoin="round" /><path d="M14 7c1.300 2 1.300 4 0 6M17 4c3 4 3 8 0 12" stroke="#1b1b1b" strokeWidth="1.500" /><path d="M20 1.500c4 5.500 4 11.500 0 17" stroke="#bba9ac" strokeWidth="1.500" /></Icon>
        </button>
        <button aria-label="Battery charging" className="ml-[13px]">
          <Icon w={24} h={20}><path d="M8 4.500h11a2 2 0 0 1 2 2v8a2 2 0 0 1-2 2H6a2 2 0 0 1-2-2" stroke="#1b1b1b" strokeWidth="1.600" /><path d="M21 8h1.500l1.500 1v3l-1.500 1H21zM7 7h6v8H6v-4z" fill="#1b1b1b" /><path d="M0 3h8v3c0 2-1.500 3.500-4 3.500S0 8 0 6zM1 0h1.500v3H1zM5.500 0H7v3H5.500zM3.300 9h1.500v8H3.300z" fill="#1b1b1b" /></Icon>
        </button>
        <button className="ml-5 w-[88px] text-right whitespace-nowrap"><span className="block">19:57</span><span className="block">23-11-2023</span></button>
        <span className="ml-[9px] flex h-6 w-[30px] items-center justify-center rounded-full bg-[#0a78d4] text-[16px] text-white">20</span>
      </div>
    </footer>
  );
}

export default function App() {
  return (
    <div className="flex h-screen flex-col overflow-hidden bg-[#f7f7f7]">
      <TabStrip />
      <Toolbar />
      <div className="flex min-h-0 flex-1">
        <main className="mb-[5px] ml-[6px] flex min-w-0 flex-1 flex-col overflow-hidden rounded-xl bg-white shadow-[0_0_3px_rgba(0,0,0,0.3)]">
          <SiteHeader />
          <div className="flex min-h-0 flex-1">
            <SideNav />
            <div className="flex min-w-0 flex-1">
              <div className="flex pt-2 pl-[30px]">
                <Assessment />
              </div>
              <ScrollBar />
            </div>
          </div>
        </main>
        <EdgeSidebar />
      </div>
      <TaskBar />
    </div>
  );
}
